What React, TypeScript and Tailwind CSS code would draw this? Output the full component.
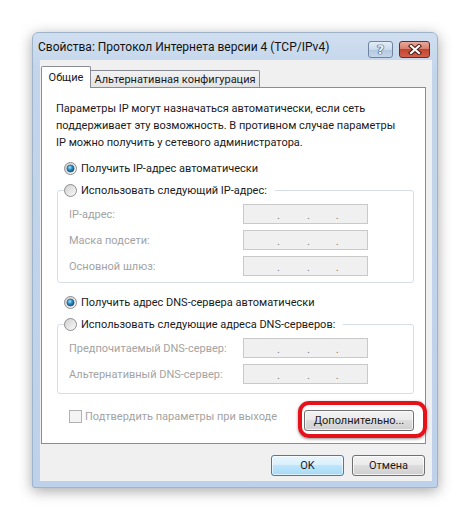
import React from "react";

const FONT = { fontFamily: 'Roboto, "Noto Sans", sans-serif' };

function Radio({ checked }: { checked?: boolean }) {
  return (
    <svg width="13" height="13" viewBox="0 0 13 13" className="shrink-0">
      <defs>
        <linearGradient id="rbg" x1="0" y1="0" x2="1" y2="1">
          <stop offset="0" stopColor="#cfcfcf" />
          <stop offset="1" stopColor="#fbfbfb" />
        </linearGradient>
        <radialGradient id="rdot" cx="0.4" cy="0.35" r="0.75">
          <stop offset="0" stopColor="#a6e3ff" />
          <stop offset="0.45" stopColor="#2a8cc4" />
          <stop offset="1" stopColor="#0d3f68" />
        </radialGradient>
      </defs>
      <circle cx="6.5" cy="6.5" r="6" fill="url(#rbg)" stroke="#8d8d8d" strokeWidth="1" />
      {checked && <circle cx="6.5" cy="6.5" r="3.6" fill="url(#rdot)" stroke="#1b5177" strokeWidth="0.6" />}
    </svg>
  );
}

function IpBox() {
  return (
    <div className="w-[125px] h-[20px] border border-[#c9c9c9] bg-[#f0f0f0] relative flex items-end text-[#7a7a7a] text-[11px] leading-[14px]">
      <span className="ml-[33px]">.</span>
      <span className="ml-[27px]">.</span>
      <span className="ml-[26px]">.</span>
    </div>
  );
}

function FieldRow({ label }: { label: string }) {
  return (
    <div className="flex items-center h-[20px]">
      <span className="w-[174px] text-[#a3a3a3]">{label}</span>
      <IpBox />
    </div>
  );
}

function WinButton({ children, primary, className = "" }: { children: React.ReactNode; primary?: boolean; className?: string }) {
  return (
    <div
      className={
        "h-[21px] flex items-center justify-center rounded-[3px] border text-[11px] text-[#1a1a1a] " +
        (primary
          ? "border-[#3c7fb1] bg-[linear-gradient(to_bottom,#eaf6fd_0%,#d9f0fc_45%,#bee6fd_50%,#a7d9f5_100%)] shadow-[inset_0_0_0_1px_rgba(255,255,255,0.6)] "
          : "border-[#707070] bg-[linear-gradient(to_bottom,#f2f2f2_0%,#ebebeb_45%,#dddddd_50%,#cfcfcf_100%)] shadow-[inset_0_0_0_1px_rgba(255,255,255,0.7)] ") +
        className
      }
    >
      {children}
    </div>
  );
}

export default function App() {
  return (
    <div className="w-[470px] h-[520px] bg-white pt-[32px] pl-[32px]" style={FONT}>
      <div className="w-[406px] h-[456px] border border-[#9fb3cb] rounded-t-[6px] rounded-b-[2px] bg-[linear-gradient(to_bottom,#d0dff0,#c2d5eb_40px,#bdd2ea)] shadow-[0_3px_14px_rgba(0,0,0,0.35)] flex flex-col">
        {/* title bar */}
        <div className="h-[27px] flex items-start pl-[5px] pr-[7px]">
          <div className="mt-[6px] text-[12px] leading-[17px] text-[#111] whitespace-nowrap">
            Свойства: Протокол Интернета версии 4 (TCP/IPv4)
          </div>
          <div className="ml-auto mt-[8px] flex gap-[6px]">
            <div className="w-[25px] h-[17px] rounded-[3px] border border-[#6d83a0] bg-[linear-gradient(to_bottom,#e4edf7_0%,#cbdaeb_50%,#b3c8e0_51%,#c4d6ea_100%)] flex items-center justify-center">
              <span className="text-[13px] leading-[13px] font-bold text-[#eef3f9] [text-shadow:0_0_1px_#2d3f58,0_0_1px_#2d3f58,0_0_1px_#2d3f58]" style={{ fontFamily: '"DejaVu Sans", sans-serif' }}>
                ?
              </span>
            </div>
            <div className="w-[31px] h-[17px] rounded-[3px] border border-[#6b2a22] bg-[linear-gradient(to_bottom,#e9a99c_0%,#d77f6c_45%,#c4452f_50%,#d0604a_100%)] flex items-center justify-center">
              <svg width="14" height="11" viewBox="0 0 14 11">
                <path d="M3 2 L11 9 M11 2 L3 9" stroke="#4a1a14" strokeWidth="4.2" strokeLinecap="square" />
                <path d="M3 2 L11 9 M11 2 L3 9" stroke="#ffffff" strokeWidth="2.2" strokeLinecap="square" />
              </svg>
            </div>
          </div>
        </div>

        {/* client */}
        <div className="ml-[7px] w-[392px] h-[421px] bg-[#f0f0f0] text-[11px] leading-[17px] text-[#1a1a1a] flex flex-col whitespace-nowrap">
          {/* tabs */}
          <div className="mt-[6px] h-[21px] flex items-end pl-[1px]">
            <div className="relative z-10 w-[50px] h-[22px] -mb-[1px] bg-white border border-b-0 border-[#898c95] rounded-t-[2px] flex items-center justify-center">
              Общие
            </div>
            <div className="w-[169px] h-[17px] border border-l-0 border-b-0 border-[#898c95] rounded-tr-[2px] bg-[linear-gradient(to_bottom,#f2f2f2,#e3e3e3)] flex items-center justify-center pt-[1px]">
              Альтернативная конфигурация
            </div>
          </div>

          {/* panel */}
          <div className="ml-[1px] w-[385px] h-[357px] bg-white border border-[#898c95] pl-[14px] pr-[11px] pt-[12px] flex flex-col">
            <p className="leading-[17px]">
              Параметры IP могут назначаться автоматически, если сеть
              <br />
              поддерживает эту возможность. В противном случае параметры
              <br />
              IP можно получить у сетевого администратора.
            </p>

            <div className="mt-[9px] ml-[8px] flex items-center gap-[4px] h-[17px]">
              <Radio checked />
              <span>Получить IP-адрес автоматически</span>
            </div>

            <fieldset className="mt-[5px] ml-[1px] w-[357px] border border-[#d5dfe5] rounded-[3px] p-0 m-0">
              <legend className="ml-[6px] p-0 pr-[8px]">
                <span className="flex items-center gap-[4px] h-[17px]">
                  <Radio />
                  <span>Использовать следующий IP-адрес:</span>
                </span>
              </legend>
              <div className="pl-[11px] pt-[5px] pb-[6px] flex flex-col gap-[6px]">
                <FieldRow label="IP-адрес:" />
                <FieldRow label="Маска подсети:" />
                <FieldRow label="Основной шлюз:" />
              </div>
            </fieldset>

            <div className="mt-[11px] ml-[8px] flex items-center gap-[4px] h-[17px]">
              <Radio checked />
              <span>Получить адрес DNS-сервера автоматически</span>
            </div>

            <fieldset className="mt-[5px] ml-[1px] w-[357px] border border-[#d5dfe5] rounded-[3px] p-0 m-0">
              <legend className="ml-[6px] p-0 pr-[8px]">
                <span className="flex items-center gap-[4px] h-[17px]">
                  <Radio />
                  <span>Использовать следующие адреса DNS-серверов:</span>
                </span>
              </legend>
              <div className="pl-[11px] pt-[5px] pb-[9px] flex flex-col gap-[6px]">
                <FieldRow label="Предпочитаемый DNS-сервер:" />
                <FieldRow label="Альтернативный DNS-сервер:" />
              </div>
            </fieldset>

            <div className="flex items-start">
              <div className="mt-[14px] ml-[13px] flex items-center gap-[3px] h-[17px] text-[#a3a3a3]">
                <div className="w-[13px] h-[13px] border border-[#b1b1b1] bg-[#f4f4f4]" />
                <span>Подтвердить параметры при выходе</span>
              </div>
              <div className="ml-auto mt-[16px] relative">
                <WinButton className="w-[110px]">Дополнительно...</WinButton>
                <div className="absolute -left-[6px] -top-[9px] -right-[13px] -bottom-[7px] rounded-[11px] border-[4px] border-[#e5121a] shadow-[0_1px_3px_rgba(0,0,0,0.45)]" />
              </div>
            </div>
          </div>

          {/* bottom buttons */}
          <div className="mt-[11px] flex justify-end gap-[8px] pr-[7px]">
            <WinButton primary className="w-[73px]">OK</WinButton>
            <WinButton className="w-[73px]">Отмена</WinButton>
          </div>
        </div>
      </div>
    </div>
  );
}
